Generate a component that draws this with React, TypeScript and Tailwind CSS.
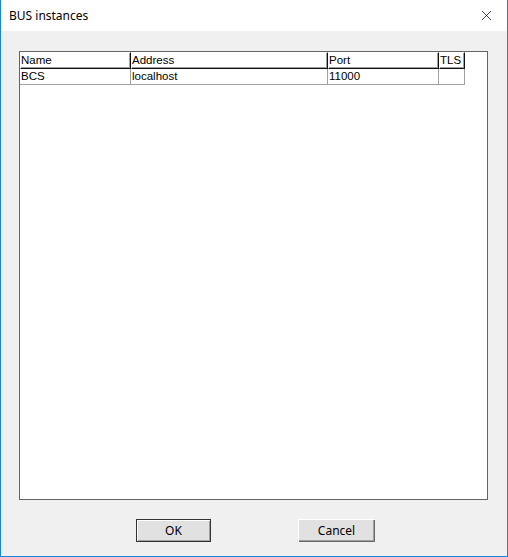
import { X } from "lucide-react";

const cols = [
  { name: "Name", w: "w-[111px]" },
  { name: "Address", w: "w-[197px]" },
  { name: "Port", w: "w-[111px]" },
  { name: "TLS", w: "w-[26px]" },
];

const row = ["BCS", "localhost", "11000", ""];

export default function App() {
  return (
    <div className="w-[508px] h-[557px] bg-[#f0f0f0] border-x border-b border-[#1883d7] flex flex-col font-['Liberation_Sans',sans-serif] text-black">
      <div className="h-[31px] bg-white flex items-center justify-between pl-[8px] pr-[12px]">
        <span className="text-[12px] font-['Noto_Sans',sans-serif]">BUS instances</span>
        <X className="w-[17px] h-[17px]" strokeWidth={1} />
      </div>

      <div className="mt-[20px] ml-[18px] w-[469px] h-[449px] border border-[#646464] bg-white">
        <div className="flex h-[17px]">
          {cols.map((c) => (
            <div
              key={c.name}
              className={`${c.w} h-[17px] border-l border-t border-white border-r border-b border-r-[#101010] border-b-[#101010] shadow-[inset_-1px_-1px_0_#a0a0a0] text-[11.5px] leading-[15px] pl-0 bg-white`}
            >
              {c.name}
            </div>
          ))}
        </div>
        <div className="flex h-[16px]">
          {row.map((v, i) => (
            <div
              key={i}
              className={`${cols[i].w} h-[16px] border-r border-b border-[#a0a0a0] text-[11.5px] leading-[15px] pl-[1px]`}
            >
              {v}
            </div>
          ))}
        </div>
      </div>

      <div className="flex mt-[19px]">
        <button className="ml-[135px] w-[75px] h-[23px] border border-[#333] bg-[#e1e1e1] shadow-[inset_1px_1px_0_#fff,inset_-1px_-1px_0_#a0a0a0] text-[12px] font-['Noto_Sans',sans-serif] leading-none">
          OK
        </button>
        <button className="ml-[87px] w-[77px] h-[23px] bg-[#e1e1e1] shadow-[inset_1px_1px_0_#fff,inset_-1px_-1px_0_#696969,inset_-2px_-2px_0_#a0a0a0] text-[12px] font-['Noto_Sans',sans-serif] leading-none">
          Cancel
        </button>
      </div>
    </div>
  );
}
